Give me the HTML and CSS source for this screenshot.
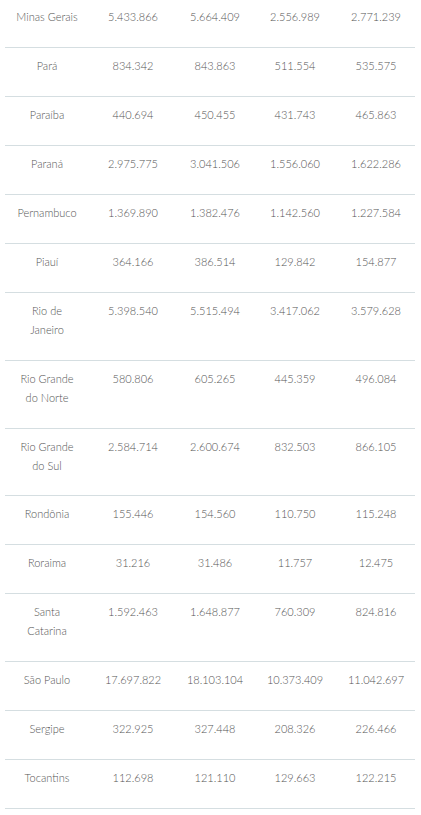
FILE: index.html
```html
<!DOCTYPE html>
<html>
<head>
    <meta charset="utf-8">
    <meta name="viewport" content="width=device-width, initial-scale=1.0">
    <title>População por estado</title>
    <link rel="stylesheet" href="styles.css">
</head>
<body>
    <article>
        <table id="popTable">
            <colgroup>
                <col class="col-uf" />
                <col class="col-a" />
                <col class="col-b" />
                <col class="col-c" />
                <col class="col-d" />
            </colgroup>
            <tbody>
                <tr><td>Minas Gerais</td><td>5.433.866</td><td>5.664.409</td><td>2.556.989</td><td>2.771.239</td></tr>
                <tr><td>Pará</td><td>834.342</td><td>843.863</td><td>511.554</td><td>535.575</td></tr>
                <tr><td>Paraíba</td><td>440.694</td><td>450.455</td><td>431.743</td><td>465.863</td></tr>
                <tr><td>Paraná</td><td>2.975.775</td><td>3.041.506</td><td>1.556.060</td><td>1.622.286</td></tr>
                <tr><td>Pernambuco</td><td>1.369.890</td><td>1.382.476</td><td>1.142.560</td><td>1.227.584</td></tr>
                <tr><td>Piauí</td><td>364.166</td><td>386.514</td><td>129.842</td><td>154.877</td></tr>
                <tr><td>Rio de<br>Janeiro</td><td>5.398.540</td><td>5.515.494</td><td>3.417.062</td><td>3.579.628</td></tr>
                <tr><td>Rio Grande<br>do Norte</td><td>580.806</td><td>605.265</td><td>445.359</td><td>496.084</td></tr>
                <tr class="short"><td>Rio Grande<br>do Sul</td><td>2.584.714</td><td>2.600.674</td><td>832.503</td><td>866.105</td></tr>
                <tr><td>Rondônia</td><td>155.446</td><td>154.560</td><td>110.750</td><td>115.248</td></tr>
                <tr><td>Roraima</td><td>31.216</td><td>31.486</td><td>11.757</td><td>12.475</td></tr>
                <tr><td>Santa<br>Catarina</td><td>1.592.463</td><td>1.648.877</td><td>760.309</td><td>824.816</td></tr>
                <tr><td>São Paulo</td><td>17.697.822</td><td>18.103.104</td><td>10.373.409</td><td>11.042.697</td></tr>
                <tr><td>Sergipe</td><td>322.925</td><td>327.448</td><td>208.326</td><td>226.466</td></tr>
                <tr><td>Tocantins</td><td>112.698</td><td>121.110</td><td>129.663</td><td>122.215</td></tr>
            </tbody>
        </table>
    </article>
</body>
</html>
```

FILE: styles.css
```css
body {
    margin: 0;
    background: #ffffff;
    font-family: "Lato", "Open Sans", sans-serif;
}
article {
    padding: 0 6px 0 5px;
    margin-top: -1px;
}

table {
    width: 410px;
    border-collapse: collapse;
    table-layout: fixed;
}
td {
    padding: 8px 2px 21px;
    border-bottom: 1px solid #d5dee1;
    font-size: 11px;
    font-weight: 300;
    line-height: 19px;
    color: #555555;
    text-align: center;
    vertical-align: top;
    white-space: nowrap;
}
tr.short td {
    padding-bottom: 20px;
}
.col-uf { width: 84px; }
.col-a { width: 88px; }
.col-b { width: 76px; }
.col-c { width: 84px; }
.col-d { width: 78px; }
```
